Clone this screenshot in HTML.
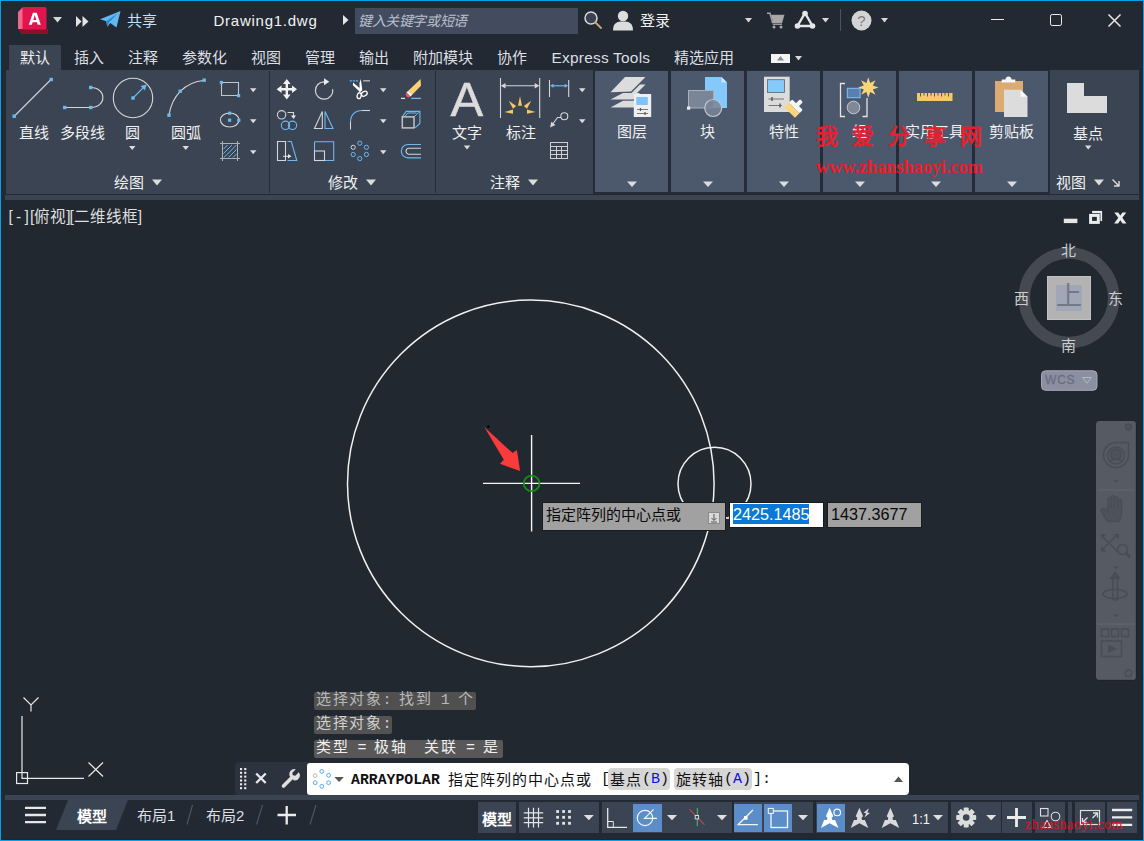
<!DOCTYPE html>
<html lang="zh-CN">
<head>
<meta charset="utf-8">
<title>Autodesk AutoCAD - Drawing1.dwg</title>
<style>
*{box-sizing:border-box;margin:0;padding:0}
html,body{width:1144px;height:841px;overflow:hidden;background:#222933}
body{font-family:"Liberation Sans",sans-serif;color:#ececec;font-size:15px;position:relative}
.t{position:absolute;white-space:nowrap;line-height:16px;height:16px;font-size:15px}
.tab{color:#dcdfe3}
.lbl{color:#f0f0f0}
svg{position:absolute;overflow:visible}
.box{position:absolute}
#frame{position:absolute;left:0;top:0;width:1144px;height:841px;border:1.200px solid #08a0e8;box-shadow:inset 0 0 0 0.900px #25242c;z-index:50}
#ribbon{position:absolute;left:6px;top:70px;width:1133px;height:124px;background:#3b4453}
.hp{position:absolute;top:71px;width:73px;height:121px;background:#4c586c}
.sep{position:absolute;top:71px;width:1px;height:122px;background:#262c37}
#band1{position:absolute;left:5px;top:195px;width:1134px;height:5px;background:#3b4453}
#canvas{position:absolute;left:1px;top:200px;width:1142px;height:595px;background:#212830}
#band2{position:absolute;left:5px;top:795px;width:1134px;height:5px;background:#3b4453}
.cmp{font-family:"Liberation Serif",serif;font-weight:300;font-size:15px;color:#cdcdcd}
.hist{background:#555;color:#dadada;height:17.500px;line-height:17.500px;border-radius:2px;font-family:"Liberation Mono",monospace;font-size:15px;padding-left:2px;white-space:pre;letter-spacing:1.600px}
.hl{letter-spacing:-0.600px}
.vp{top:209px;color:#dedede;font-size:15.600px}
.cmdm{font-family:"Liberation Mono",monospace;font-size:15px;color:#111;line-height:18px;height:18px}
.sb{position:absolute;top:802px;height:31px;background:#3b4453}
.sba{position:absolute;top:804px;height:28px;background:#5b8dc9}
</style>
</head>
<body>
<!-- ===== TITLE BAR ===== -->
<div id="titlebar">
<svg id="logo" style="left:18px;top:6.500px" width="31" height="28" viewBox="0 0 31 28">
<polygon points="0,5 5,0 5,22 0,22" fill="#ef6a8a"/>
<polygon points="0,22 5,22 30,22 30,27 3,27" fill="#8e0f2c"/>
<rect x="4.5" y="0" width="24" height="22.5" rx="1.5" fill="#e2144e"/>
<path d="M10.800 17.800 L14.900 5.800 H18.700 L22.800 17.800 H19.700 L19 15.300 H14.600 L13.900 17.800 Z M15.300 12.900 H18.300 L16.800 8 Z" fill="#fff"/>
</svg>
<svg style="left:53px;top:17px" width="9" height="6" viewBox="0 0 9 6"><polygon points="0,0 9,0 4.5,5.5" fill="#d8d8d8"/></svg>
<svg style="left:76px;top:16px" width="13" height="11" viewBox="0 0 13 11"><polygon points="0,0 5.5,5.5 0,11" fill="#e4e4e4"/><polygon points="6.5,0 12.5,5.5 6.5,11" fill="#e4e4e4"/></svg>
<svg style="left:100px;top:11px" width="21" height="17" viewBox="0 0 21 17"><path d="M0 8.2 L20.5 0 L16.5 16.5 L10.3 12 L7.3 15.8 L6.2 10.3 Z" fill="#62b8f2"/><path d="M6.2 10.3 L18 2.2 L9 11.3 L7.3 15.8 Z" fill="#2f86c8"/></svg>
<div class="t" style="left:127px;top:13px;color:#bfe0ff">共享</div>
<div class="t" style="left:213.500px;top:11.500px;font-size:15px;letter-spacing:0.750px;line-height:18px;height:18px;color:#f2f2f2">Drawing1.dwg</div>
<svg style="left:343px;top:15px" width="6" height="10" viewBox="0 0 6 10"><polygon points="0,0 5.5,5 0,10" fill="#e8e8e8"/></svg>
<div class="box" style="left:355px;top:8px;width:223px;height:26px;background:#434c5f"></div>
<div class="t" style="left:358px;top:13px;font-style:italic;font-size:14px;color:#b9bfcc;letter-spacing:-0.4px">键入关键字或短语</div>
<svg style="left:583px;top:10px" width="20" height="20" viewBox="0 0 20 20"><circle cx="8" cy="8" r="6" fill="#3a4150" stroke="#d8d8d8" stroke-width="1.500"/><path d="M12.500 12.500 L18 18" stroke="#c9a36a" stroke-width="2" stroke-linecap="round"/></svg>
<svg style="left:612px;top:10px" width="22" height="21" viewBox="0 0 22 21"><circle cx="11" cy="6" r="5.2" fill="#dcdcdc"/><path d="M1 20.5 C1 13 5 11.5 11 11.5 C17 11.5 21 13 21 20.5 Z" fill="#dcdcdc"/></svg>
<div class="t" style="left:640px;top:13px;color:#f2f2f2">登录</div>
<svg style="left:745px;top:18px" width="7" height="5" viewBox="0 0 7 5"><polygon points="0,0 7,0 3.5,4.5" fill="#d8d8d8"/></svg>
<svg style="left:767px;top:11.500px" width="20" height="18" viewBox="0 0 20 18"><path d="M0 1.200 H3 L5.500 10.500 H14.500 L16.500 3.500 H4.500" fill="none" stroke="#a4a4a4" stroke-width="1.500"/><path d="M4.500 4 H16 L14.500 10 H6 Z" fill="#a9a9a9"/><path d="M5.800 12.300 H15" stroke="#a4a4a4" stroke-width="1.200"/><circle cx="7" cy="15" r="1.500" fill="#a9a9a9"/><circle cx="14" cy="15" r="1.500" fill="#a9a9a9"/></svg>
<svg style="left:794px;top:10px" width="22" height="20" viewBox="0 0 22 20"><path d="M11 3 L3.5 16 H18.5 Z" fill="none" stroke="#e6e6e6" stroke-width="2.4" stroke-linejoin="round"/><circle cx="11" cy="3.5" r="2.8" fill="#e6e6e6"/><circle cx="3.5" cy="16" r="2.8" fill="#e6e6e6"/><circle cx="18.5" cy="16" r="2.8" fill="#e6e6e6"/></svg>
<svg style="left:822px;top:18px" width="7" height="5" viewBox="0 0 7 5"><polygon points="0,0 7,0 3.5,4.5" fill="#d8d8d8"/></svg>
<div class="box" style="left:840px;top:9px;width:1px;height:22px;background:#4a5263"></div>
<svg style="left:851px;top:10px" width="21" height="21" viewBox="0 0 21 21"><circle cx="10.5" cy="10.5" r="10" fill="#d4d4d4"/><text x="10.500" y="15.800" text-anchor="middle" font-family="Liberation Sans, sans-serif" font-size="15" fill="#7d7d7d">?</text></svg>
<svg style="left:881px;top:18px" width="7" height="5" viewBox="0 0 7 5"><polygon points="0,0 7,0 3.5,4.5" fill="#d8d8d8"/></svg>
<div class="box" style="left:991px;top:18.500px;width:13px;height:1.500px;background:#ececec"></div>
<div class="box" style="left:1049.700px;top:13.700px;width:12.600px;height:12.600px;border:1.700px solid #ececec;border-radius:2.200px"></div>
<svg style="left:1108px;top:14px" width="13" height="13" viewBox="0 0 13 13"><path d="M0.5 0.5 L12.5 12.5 M12.5 0.5 L0.5 12.5" stroke="#e8e8e8" stroke-width="1.5"/></svg>
</div>
<!-- ===== TABS ===== -->
<div id="tabs">
<div class="box" style="left:9px;top:45px;width:52px;height:26px;background:#3b4453"></div>
<div class="t lbl" style="left:20px;top:50px">默认</div>
<div class="t tab" style="left:74px;top:50px">插入</div>
<div class="t tab" style="left:128px;top:50px">注释</div>
<div class="t tab" style="left:182px;top:50px">参数化</div>
<div class="t tab" style="left:251px;top:50px">视图</div>
<div class="t tab" style="left:305px;top:50px">管理</div>
<div class="t tab" style="left:359px;top:50px">输出</div>
<div class="t tab" style="left:413px;top:50px">附加模块</div>
<div class="t tab" style="left:497px;top:50px">协作</div>
<div class="t tab" style="left:551.500px;top:50px;font-size:15.400px;letter-spacing:0.250px">Express Tools</div>
<div class="t tab" style="left:674px;top:50px">精选应用</div>
<div class="box" style="left:771px;top:54px;width:19px;height:9px;background:#f4f4f4"></div>
<svg style="left:777px;top:56px" width="7" height="5" viewBox="0 0 7 5"><polygon points="0,4.5 7,4.5 3.5,0" fill="#8a8a8a"/></svg>
<svg style="left:795px;top:56px" width="7" height="5" viewBox="0 0 7 5"><polygon points="0,0 7,0 3.5,4.5" fill="#d8d8d8"/></svg>
</div>
<!-- ===== RIBBON ===== -->
<div id="ribbon"></div>
<div id="band1"></div>
<div id="ribbon-content">
<!-- separators -->
<div class="sep" style="left:269px"></div>
<div class="sep" style="left:435px"></div>
<!-- highlighted collapsed panels -->
<div class="box" style="left:593px;top:70px;width:457px;height:124px;background:#262c37"></div>
<div class="hp" style="left:595px"></div><div class="hp" style="left:671px"></div><div class="hp" style="left:747px"></div>
<div class="hp" style="left:823px"></div><div class="hp" style="left:899px"></div><div class="hp" style="left:975px"></div>
<!-- DRAW panel icons: one svg in page coords -->
<svg style="left:0;top:0" width="1144" height="200" viewBox="0 0 1144 200" fill="none" stroke-linecap="butt">
<g stroke="#d6d6d6" stroke-width="1.1">
<!-- line -->
<path d="M14.5 116 L51 79.5"/>
<!-- polyline -->
<path d="M64.500 107.500 H90.500 M90.500 87.500 C107 87.500 107 107.500 90.500 107.500"/>
<!-- circle -->
<circle cx="133" cy="98" r="19.7"/>
<!-- arc -->
<path d="M169 115 C172 96 185 82 204 80.5"/>
<!-- rect -->
<path d="M221.500 82.500 H238.500 V95.500 H221.500 Z" stroke="#c4c4c4"/>
<!-- ellipse -->
<ellipse cx="229.7" cy="120" rx="9.3" ry="7"/>
<!-- hatch frame -->
<path d="M222.500 141 V161 M237.500 141 V161 M220 143.500 H240 M220 158.500 H240" stroke="#b0b0b0" stroke-width="1"/>
</g>
<g stroke="#6cb9f0" stroke-width="1.1">
<path d="M133 98 L144.5 86.5"/>
<path d="M224 157.500 L236.500 145 M223.500 153.500 L232 145 M223.500 149 L227.500 145 M228.500 157.500 L236.500 149.500 M233 157.500 L236.500 154" stroke-width="1"/>
</g>
<polygon points="146.5,84.5 140.5,86 145,90.5" fill="#6cb9f0"/>
<g fill="#6cb9f0">
<rect x="12.5" y="114.5" width="3.4" height="3.4"/><rect x="49.5" y="77.8" width="3.4" height="3.4"/>
<rect x="63" y="105.800" width="3.400" height="3.400"/><rect x="89" y="105.800" width="3.400" height="3.400"/><rect x="89" y="85.8" width="3.4" height="3.4"/>
<rect x="131.3" y="96.3" width="3.4" height="3.4"/>
<rect x="167.3" y="113.5" width="3.4" height="3.4"/><rect x="178.5" y="89.5" width="3.4" height="3.4"/><rect x="202.5" y="78.5" width="3.4" height="3.4"/>
<rect x="219.800" y="80.900" width="3.200" height="3.200"/><rect x="237" y="94" width="3.200" height="3.200"/>
<rect x="228" y="111.600" width="3.200" height="3.200"/><rect x="228" y="118.600" width="3.200" height="3.200"/><rect x="237.200" y="118.600" width="3.200" height="3.200"/>
</g>
<!-- small dropdown arrows -->
<g fill="#dcdcdc">
<polygon points="250,88.2 256.5,88.2 253.2,92.2"/><polygon points="250,119.2 256.5,119.2 253.2,123.2"/><polygon points="250,150.2 256.5,150.2 253.2,154.2"/>
<polygon points="129,146 135.5,146 132.2,150"/><polygon points="182.5,146 189,146 185.7,150"/>
<polygon points="152,179.5 162,179.5 157,185.5"/>
<polygon points="380,88.2 386.5,88.2 383.2,92.2"/><polygon points="380,119.2 386.5,119.2 383.2,123.2"/><polygon points="380,150.2 386.5,150.2 383.2,154.2"/>
<polygon points="366,179.5 376,179.5 371,185.5"/>
<polygon points="463.8,145.5 470.3,145.5 467,149.5"/>
<polygon points="579,88.2 585.5,88.2 582.2,92.2"/><polygon points="579,119.2 585.5,119.2 582.2,123.2"/>
<polygon points="528,179.5 538,179.5 533,185.5"/>
</g>
<!-- MODIFY panel -->
<!-- move -->
<g fill="#f2f2f2" stroke="none">
<path d="M286.8 79 L290.6 84 H288 V88 H292 V85.4 L297 89.2 L292 93 V90.4 H288 V94.4 H290.6 L286.8 99.4 L283 94.4 H285.6 V90.4 H281.6 V93 L276.6 89.2 L281.6 85.4 V88 H285.6 V84 H283 Z"/>
</g>
<!-- rotate -->
<path d="M324.500 81.800 A8.700 8.700 0 1 0 332.700 89.200" stroke="#d6d6d6" stroke-width="1.200"/>
<polygon points="324,78.300 329.300,81.800 324,85.300" fill="#ececec"/>
<!-- trim scissors -->
<path d="M360.850 79 L362.300 90.300 L359.600 91.800 L359.500 83 Z" fill="#fff"/>
<path d="M353 82.400 L362 90 L360.200 92.300 L352.900 85.300 Z" fill="#fff"/>
<ellipse cx="359.200" cy="95.700" rx="2" ry="3" transform="rotate(14 359.200 95.700)" stroke="#fff" stroke-width="1.300"/>
<ellipse cx="364.300" cy="93.700" rx="3.100" ry="2.200" transform="rotate(-32 364.300 93.700)" stroke="#fff" stroke-width="1.300"/>
<path d="M349.800 80.800 H359" stroke="#6cb9f0" stroke-width="1.300" stroke-dasharray="2 1"/>
<path d="M363.200 80.800 H370" stroke="#bdbdbd" stroke-width="1.300"/>
<!-- eraser -->
<polygon points="420.600,78.900 421,85.800 412.200,94.700 408.300,90.700" fill="#fbd271"/>
<polygon points="408.300,90.700 412.200,94.700 410.400,96.500 406.500,92.600" fill="#fff"/>
<path d="M406.500 92.600 A2.760 2.760 0 0 0 410.400 96.500 Z" fill="#f4545c"/>
<path d="M401 98.400 H405.100" stroke="#e0e0e0" stroke-width="1.300"/><path d="M411.200 98.400 H421" stroke="#6cb9f0" stroke-width="1.300"/>
<!-- copy -->
<circle cx="281.6" cy="114.8" r="4.2" stroke="#d6d6d6" stroke-width="1.1"/>
<path d="M287.5 112.5 H293.5 V116" stroke="#d6d6d6" stroke-width="1.1"/><polygon points="291,115.5 296,115.5 293.5,119" fill="#e6e6e6"/>
<circle cx="285.5" cy="125.3" r="4.2" stroke="#6cb9f0" stroke-width="1.1"/><circle cx="292.5" cy="125.3" r="4.2" stroke="#6cb9f0" stroke-width="1.1"/>
<!-- mirror -->
<path d="M322.3 111.5 L314.5 128.5 H322.3 Z" stroke="#d6d6d6" stroke-width="1.1"/>
<path d="M325 111.5 L333 128.5 H325 Z" stroke="#6cb9f0" stroke-width="1.1"/>
<!-- fillet -->
<path d="M350.5 129.5 V122" stroke="#d6d6d6" stroke-width="1.1"/><path d="M362 110.5 H370" stroke="#d6d6d6" stroke-width="1.1"/>
<path d="M350.5 122 C350.5 115 355 110.5 362 110.5" stroke="#6cb9f0" stroke-width="1.2"/>
<!-- 3d box -->
<path d="M402.300 116.900 L406.200 111.400 H419.900 V123.400 L415 127.800" stroke="#6cb9f0" stroke-width="1.100"/>
<path d="M414 116.900 L419.900 111.400 M405 116.500 L407.800 113 H416.500" stroke="#6cb9f0" stroke-width="1"/>
<rect x="402.300" y="116.900" width="11.700" height="11" stroke="#c4c4c4" stroke-width="1.500"/>
<!-- stretch -->
<path d="M285.500 141.500 H277.500 V160.500 H285.500 Z" stroke="#d6d6d6" stroke-width="1.100"/>
<path d="M287.500 141.500 H291.300 L296.800 160.500 H287.500" stroke="#6cb9f0" stroke-width="1.100"/>
<path d="M283 156.3 H289" stroke="#e6e6e6" stroke-width="1"/><polygon points="288,154 291.5,156.3 288,158.6" fill="#e6e6e6"/>
<!-- scale -->
<path d="M314.5 141.7 H333.7 V160.5 H325" stroke="#6cb9f0" stroke-width="1.1"/><path d="M314.5 141.7 V151" stroke="#6cb9f0" stroke-width="1.1"/>
<rect x="314.5" y="151" width="10" height="9.5" stroke="#d6d6d6" stroke-width="1.1"/>
<!-- array polar -->
<g stroke="#6cb9f0" stroke-width="1">
<circle cx="359.8" cy="143.2" r="2.1"/><circle cx="366.4" cy="147.3" r="2.1"/><circle cx="366.4" cy="154.5" r="2.1"/><circle cx="359.8" cy="158.6" r="2.1"/><circle cx="353.2" cy="154.5" r="2.1"/>
</g>
<circle cx="353.2" cy="147.3" r="2.1" stroke="#d6d6d6" stroke-width="1"/>
<!-- offset -->
<path d="M421 144.5 H408 A6.5 6.5 0 0 0 408 157.8 H421" stroke="#6cb9f0" stroke-width="1.2"/>
<path d="M421 148.2 H409 A3 3 0 0 0 409 154.2 H421" stroke="#d6d6d6" stroke-width="1.1"/>
<!-- ANNOTATE -->
<!-- dimension big -->
<g stroke="#d6d6d6" stroke-width="1.1">
<path d="M500.5 78 V118 M539.7 78 V118 M503 85.8 H537"/>
<path d="M549.5 80 V97 M568.7 80 V97"/>
</g>
<polygon points="500.8,85.8 505.5,83 505.5,88.6" fill="#d6d6d6"/><polygon points="539.4,85.8 534.7,83 534.7,88.6" fill="#d6d6d6"/>
<g fill="#f7c95a">
<polygon points="520,96.300 518,105.800 522,105.800"/>
<polygon points="508.800,100.700 513,108.800 516.200,106"/>
<polygon points="531.200,100.700 527,108.800 523.800,106"/>
<polygon points="504.500,112 513,109.600 513,113.800"/>
<polygon points="535.500,112 527,109.600 527,113.800"/>
</g>
<path d="M552 85.8 H566.5" stroke="#6cb9f0" stroke-width="1.2"/>
<polygon points="550,85.8 553.5,83.8 553.5,87.8" fill="#6cb9f0"/><polygon points="568.2,85.8 564.7,83.8 564.7,87.8" fill="#6cb9f0"/>
<!-- leader -->
<circle cx="564.3" cy="116.3" r="3.5" stroke="#d6d6d6" stroke-width="1.1"/>
<path d="M561 117.5 H557.5 L552 125" stroke="#d6d6d6" stroke-width="1.1"/><polygon points="550,127.5 551.3,121.8 555.5,125" fill="#d6d6d6"/>
<!-- table -->
<g stroke="#cfcfcf" stroke-width="1"><rect x="550.500" y="142.500" width="17" height="16"/><path d="M550.500 146.500 H567.500 M550.500 150.500 H567.500 M550.500 154.500 H567.500 M556.500 146.500 V158.500 M561.500 146.500 V158.500"/></g>
</svg>
<!-- labels -->
<div class="t lbl" style="left:19px;top:125px">直线</div>
<div class="t lbl" style="left:60px;top:125px">多段线</div>
<div class="t lbl" style="left:125px;top:125px">圆</div>
<div class="t lbl" style="left:171px;top:125px">圆弧</div>
<div class="t lbl" style="left:114px;top:175px">绘图</div>
<div class="t lbl" style="left:328px;top:175px">修改</div>
<div class="t lbl" style="left:452px;top:125px">文字</div>
<div class="t lbl" style="left:506px;top:125px">标注</div>
<div class="t lbl" style="left:490px;top:175px">注释</div>
<div class="t" style="left:450.500px;top:70.500px;font-size:49px;line-height:56px;height:56px;color:#dcdcdc;-webkit-text-stroke:0.500px #dcdcdc">A</div>
</div>

<div id="ribbon-content2">
<svg style="left:0;top:0" width="1144" height="200" viewBox="0 0 1144 200" fill="none">
<!-- layers -->
<g fill="#dcdcdc">
<polygon points="625,77 645.5,77 631,91.5 610.5,92.2"/>
<polygon points="623,93 640,93 633,99.5 610.5,99.5" />
<polygon points="623,100.800 634,100.800 634,107.500 610.5,107.500"/>
<polygon points="640,84.500 645.500,84.500 637,93 631.500,93" />
</g>
<rect x="633.8" y="94" width="17.4" height="23" fill="#efefef"/>
<rect x="636.3" y="97" width="11.500" height="8" fill="#7cc4fb"/>
<path d="M637 109.500 H648 M637 113.500 H648" stroke="#7a7a7a" stroke-width="1"/><path d="M640.500 108 V111 M645 112 V115" stroke="#555" stroke-width="1.2"/>
<!-- block -->
<path d="M705 77 H721.500 L727 82.500 V108 H705 Z" fill="#85c9fc"/><polygon points="721.500,77 727,82.500 721.500,82.500" fill="#c8e6fd"/>
<rect x="688.5" y="90.5" width="25" height="17.5" fill="#7b8598" stroke="#a9b0bd" stroke-width="1"/>
<circle cx="713.2" cy="108" r="8.500" fill="#7b8598" fill-opacity="0.85" stroke="#c2c6cf" stroke-width="1.2"/>
<rect x="687" y="106.5" width="3.2" height="3.2" fill="#ececec"/>
<!-- properties -->
<rect x="764" y="76.700" width="25.700" height="35.300" fill="#dcdcdc"/>
<rect x="767.500" y="79.700" width="17" height="12.800" fill="#86cafc" stroke="#5a6270" stroke-width="0.800"/>
<path d="M768.500 99 H784 M768.500 105.500 H782" stroke="#777" stroke-width="1"/><path d="M772 97 V101 M780 103.500 V107.500" stroke="#555" stroke-width="1.400"/>
<g transform="translate(794.100,108) rotate(45)"><rect x="-7.500" y="0" width="15" height="6.300" fill="#fdd67a"/><rect x="-7.500" y="-4.800" width="15" height="4.800" rx="1.200" fill="#f4f4f4"/><rect x="-2.100" y="-10.500" width="4.200" height="6.500" rx="1.300" fill="#f4f4f4"/></g>
<!-- group -->
<path d="M845 83.500 H840.500 V116.500 H845 M862.500 116.500 H867 V98" stroke="#e4e4e4" stroke-width="1.300"/>
<rect x="847.300" y="88.300" width="12.800" height="9.400" fill="#5b7fae" stroke="#7cc4fb" stroke-width="1"/>
<circle cx="853.500" cy="107.500" r="6.300" fill="#7f8898" stroke="#c7cad1" stroke-width="1"/>
<polygon fill="#f8d577" points="868.3,77.300 870.200,83.000 875.500,80.300 872.800,85.600 878.500,87.500 872.800,89.400 875.500,94.700 870.200,92.000 868.300,97.700 866.400,92.000 861.100,94.700 863.800,89.400 858.100,87.500 863.800,85.600 861.100,80.300 866.400,83.000"/>
<!-- ruler -->
<rect x="917" y="93" width="35.500" height="8" fill="#f5c96a"/>
<path d="M920.500 93 V96.500 M924 93 V95.500 M927.500 93 V96.500 M931 93 V95.500 M934.500 93 V96.500 M938 93 V95.500 M941.500 93 V96.500 M945 93 V95.500 M948.500 93 V96.500" stroke="#4c586c" stroke-width="1"/>
<!-- clipboard -->
<rect x="995" y="81" width="28" height="31" fill="#dbab73"/>
<path d="M1001.700 82.500 V79.500 H1005.500 C1005.500 75.500 1011.500 75.500 1011.500 79.500 H1015.300 V82.500 Z" fill="#f6f6f6"/>
<path d="M1004 89.700 H1020.500 L1027.500 96.700 V117 H1004 Z" fill="#dcdcdc"/><polygon points="1020.500,89.700 1027.500,96.700 1020.500,96.700" fill="#f8f8f8"/>
<!-- base L-shape -->
<path d="M1067 83 H1084 V96 H1107 V113 H1067 Z" fill="#dcdcdc"/>
<!-- arrows -->
<g fill="#dcdcdc">
<polygon points="627,181.500 637,181.500 632,187"/><polygon points="703,181.500 713,181.500 708,187"/><polygon points="779,181.500 789,181.500 784,187"/>
<polygon points="855,181.500 865,181.500 860,187"/><polygon points="931,181.500 941,181.500 936,187"/><polygon points="1007,181.500 1017,181.500 1012,187"/>
<polygon points="1085,145.500 1091.500,145.500 1088.200,149.500"/>
<polygon points="1094,179.500 1104,179.500 1099,185.500"/>
</g>
<path d="M1112.500 179.500 L1119 186 M1119 181 V186 H1114" stroke="#dcdcdc" stroke-width="1.400"/>
</svg>
<div class="t lbl" style="left:617px;top:124px">图层</div>
<div class="t lbl" style="left:700px;top:124px">块</div>
<div class="t lbl" style="left:769px;top:124px">特性</div>
<div class="t lbl" style="left:852px;top:124px">组</div>
<div class="t lbl" style="left:905px;top:124px;letter-spacing:-0.5px">实用工具</div>
<div class="t lbl" style="left:989px;top:124px">剪贴板</div>
<div class="t lbl" style="left:1073px;top:126px">基点</div>
<div class="t lbl" style="left:1056px;top:175px">视图</div>
<!-- watermark -->
<div class="t" id="wm1" style="left:816px;top:124px;font-size:22px;line-height:26px;height:26px;font-weight:bold;color:#e6202c;letter-spacing:14.100px">我爱分享网</div>
<div class="t" id="wm2" style="left:816px;top:156px;font-family:'Liberation Serif',serif;font-weight:bold;font-size:18.200px;line-height:22px;height:22px;color:#e6202c">www.zhanshaoyi.com</div>
</div>

<!-- ===== CANVAS ===== -->
<div id="canvas"></div>
<div id="canvas-content">
<div class="t vp" style="left:8.500px;letter-spacing:3.200px">[-]</div><div class="t vp" style="left:30px">[俯视]</div><div class="t vp" style="left:69.500px">[二维线框]</div>
<svg style="left:0;top:0" width="1144" height="841" viewBox="0 0 1144 841" fill="none">
<!-- viewport controls -->
<rect x="1063.800" y="218.700" width="13.600" height="4.400" fill="#e6e6e6"/>
<rect x="1092.100" y="210.900" width="10" height="10.200" fill="#ececec"/>
<rect x="1088.400" y="213.200" width="12" height="11.300" fill="#212830"/>
<rect x="1090.600" y="215.400" width="7.700" height="7" stroke="#ececec" stroke-width="3"/>
<path d="M1114.300 212.500 H1118.200 L1120.300 215.500 L1122.400 212.500 H1126.300 L1122.300 217.800 L1126.500 223.400 H1122.500 L1120.300 220.200 L1118.100 223.400 H1114.100 L1118.300 217.800 Z" fill="#ececec"/>
<!-- main geometry -->
<circle cx="530.800" cy="483.400" r="183.300" stroke="#f0f0f0" stroke-width="1.500"/>
<circle cx="714.500" cy="483.800" r="36.500" stroke="#f0f0f0" stroke-width="1.500"/>
<path d="M483 483.400 H580 M531.600 435 V531.500" stroke="#f6f6f6" stroke-width="1.400"/>
<circle cx="531.600" cy="483.400" r="7.800" stroke="#12920f" stroke-width="1.800"/>
<!-- red arrow -->
<polygon points="484.3,426.9 512.6,453.1 516.9,450 520.1,471.1 500,463.700 503.800,459.700" fill="#fb3a3c"/>
<polygon points="488.400,424.900 490,426.500 488.400,428.100 486.800,426.500" fill="#000"/>
<!-- compass -->
<circle cx="1069" cy="297.800" r="44.700" stroke="#444952" stroke-width="11.500"/>
<rect x="1047.500" y="276.500" width="43" height="43" fill="#b3b3b3" stroke="#c2c2c2" stroke-width="1"/>
<rect x="1056" y="285" width="26" height="26" fill="#a2a7b8"/>
<!-- WCS -->
<rect x="1041.500" y="370.800" width="55.500" height="19.500" rx="4" fill="#8b8fa2" stroke="#a5a9b8" stroke-width="1"/>
<path d="M1082.500 377.500 H1091.500 L1087 383.300 Z" stroke="#b4b7c4" stroke-width="1" fill="#8b8fa2"/>
<!-- navbar -->
<rect x="1096" y="421" width="40" height="259" rx="3.500" fill="#565a62"/><path d="M1136.300 424 V677 M1099 680.300 H1133" stroke="#1c2129" stroke-width="0.800"/>
<g stroke="#484d56" fill="none" stroke-width="1.500">
<circle cx="1128.500" cy="427" r="3.800" fill="#484d56" stroke="none"/>
<path d="M1126.800 425.300 L1130.200 428.700 M1130.200 425.300 L1126.800 428.700" stroke="#565a62" stroke-width="1"/>
<path d="M1116 442.500 H1128.500 V455.500 A12.500 12.500 0 1 1 1116 442.500 Z"/>
<circle cx="1116" cy="455.500" r="8.500"/><circle cx="1116" cy="454.500" r="5.500" fill="#4e535b"/><path d="M1109.500 461 Q1116 457.500 1122.500 461"/>
<path d="M1097.500 490 H1134.500 M1097.500 624 H1134.500" stroke-width="1" stroke="#62666e"/>
<path d="M1102 536 L1118 552 M1118 534 L1102 550" stroke-width="1.600"/>
<circle cx="1122.500" cy="549.500" r="5"/><path d="M1126 553 L1130 557" stroke-width="3"/>
<path d="M1113 578 V600 M1117.500 578 V600 M1113 600 H1117.500" />
<ellipse cx="1115" cy="594" rx="12" ry="4.500"/>
<rect x="1101.500" y="629" width="7" height="7.500"/><rect x="1111.500" y="629" width="7" height="7.500"/><rect x="1121.500" y="629" width="7" height="7.500"/>
<rect x="1101.500" y="641" width="20" height="15.500"/>
<circle cx="1128.500" cy="673.300" r="3.300"/>
</g>
<g fill="#484d56">
<polygon points="1113.500,480 1118.500,480 1116,482.800"/><polygon points="1113.500,566.500 1118.500,566.500 1116,569.300"/><polygon points="1113.500,614.500 1118.500,614.500 1116,617.300"/>
<polygon points="1101,534 1106.500,534 1101,539.500"/><polygon points="1119,534 1113.500,534 1119,539.500"/><polygon points="1101,551.500 1106.500,551.500 1101,546"/>
<polygon points="1115.200,571 1109.500,579 1121,579"/>
<polygon points="1108,644.500 1117,648.700 1108,653"/>

</g>
<path d="M1106.500 520 C1103 514 1099.500 510 1102.500 508.500 C1105 507.500 1106.500 511 1108 512 V499.500 C1108 497 1111 497 1111 499.500 V497.500 C1111 495 1114.500 495 1114.500 497.500 V498.500 C1114.500 496 1118 496 1118 498.500 V501 C1118 498.800 1121.500 498.800 1121.500 501 V513 C1121.500 517 1120 519.500 1118.500 521.500 H1108 Z M1111 499.500 V508 M1114.500 498 V508 M1118 500 V508" fill="#4e535b" stroke="#484d56" stroke-width="1.300"/>
<!-- UCS icon -->
<g stroke="#e8e8e8" stroke-width="1.200">
<path d="M22 716 V778.300 H84"/>
<rect x="16.600" y="772.600" width="10.900" height="10.900"/>
<path d="M23.500 697.500 L31 705 L38.500 697.500 M31 705 V711.500"/>
<path d="M88.500 762.500 L103 776.500 M103 762.500 L88.500 776.500"/>
</g>
</svg>
<!-- compass letters -->
<div class="t cmp" style="left:1061px;top:243px">北</div>
<div class="t cmp" style="left:1014px;top:291px">西</div>
<div class="t cmp" style="left:1108px;top:291px">东</div>
<div class="t cmp" style="left:1061px;top:338px">南</div>
<div class="t" style="left:1056px;top:283px;font-family:'Liberation Serif',serif;font-weight:300;font-size:26px;line-height:28px;height:28px;color:#737888">上</div>
<div class="t" style="left:1045px;top:372px;font-size:12px;color:#6a6e80;letter-spacing:0.800px;-webkit-text-stroke:0.300px #6a6e80">WCS</div>
<!-- dynamic input -->
<div class="box" style="left:542px;top:502px;width:184px;height:29px;background:#a1a1a1;border:1px solid #1b1b1b"></div>
<div class="t" style="left:546px;top:506px;color:#0a0a0a;line-height:18px;height:18px">指定阵列的中心点或</div>
<svg style="left:708px;top:512px" width="12" height="12" viewBox="0 0 12 12"><rect x="0.500" y="0.500" width="11" height="11" fill="#d8d8d8" stroke="#8a8a8a"/><path d="M6 2 V8 M3.500 6 L6 8.500 L8.500 6 M3 10 H9" stroke="#555" stroke-width="1" fill="none"/></svg>
<div class="box" style="left:726px;top:517px;width:3px;height:2px;background:#cfcfcf"></div>
<div class="box" style="left:729px;top:502px;width:95px;height:26px;background:#fff;border:1px solid #1b1b1b"></div>
<div class="box" style="left:733.200px;top:504.300px;width:76.200px;height:19.700px;background:#0a78d7"></div>
<div class="t" style="left:733px;top:505px;font-size:16.200px;line-height:19px;height:19px;color:#fff">2425.1485</div>
<div class="box" style="left:827px;top:502px;width:95px;height:26px;background:#a1a1a1;border:1px solid #1b1b1b"></div>
<div class="t" style="left:831px;top:505px;font-size:16.200px;line-height:19px;height:19px;color:#0a0a0a">1437.3677</div>
<!-- command history -->
<div class="t hist" style="left:314px;top:692px;width:162px;color:#b8b8b8;background:#505050">选择对象<span class="hl">: </span>找到<span class="hl"> 1 </span>个</div>
<div class="t hist" style="left:314px;top:716px;width:78px;color:#d0d0d0;background:#535353">选择对象<span class="hl">:</span></div>
<div class="t hist" style="left:314px;top:740px;width:189px;color:#efefef;background:#585858">类型<span class="hl"> = </span>极轴<span class="hl">  </span>关联<span class="hl"> = </span>是</div>
</div>

<div id="band2"></div>
<div id="status-content">
<!-- command line -->
<div class="box" style="left:235.200px;top:762.200px;width:75px;height:33px;background:#2c323e;border-radius:4px 0 0 4px"></div>
<div class="box" style="left:307px;top:762.700px;width:601.800px;height:32px;background:#fff;border-radius:3px 4px 4px 3px"></div>
<svg style="left:0;top:0" width="1144" height="841" viewBox="0 0 1144 841" fill="none">
<g fill="#eaeaea">
<rect x="240" y="768" width="2.100" height="2.100"/><rect x="240" y="771.75" width="2.100" height="2.100"/><rect x="240" y="775.6" width="2.100" height="2.100"/><rect x="240" y="779.45" width="2.100" height="2.100"/><rect x="240" y="783.25" width="2.100" height="2.100"/><rect x="240" y="787.1" width="2.100" height="2.100"/><rect x="244.2" y="768" width="2.100" height="2.100"/><rect x="244.2" y="771.75" width="2.100" height="2.100"/><rect x="244.2" y="775.6" width="2.100" height="2.100"/><rect x="244.2" y="779.45" width="2.100" height="2.100"/><rect x="244.2" y="783.25" width="2.100" height="2.100"/><rect x="244.2" y="787.1" width="2.100" height="2.100"/>
</g>
<path d="M256.200 773.500 L265.700 783 M265.700 773.500 L256.200 783" stroke="#e8e8e8" stroke-width="2.400"/>
<!-- wrench -->
<path d="M283.500 786 L292 777.500" stroke="#e0e0e0" stroke-width="3.600" stroke-linecap="round"/>
<path d="M298.800 772.200 L295.300 775.700 L292.800 775.200 L292.300 772.700 L295.800 769.200 A5.200 5.200 0 0 0 289.500 776 L291.800 778.300 L294 780.500 A5.200 5.200 0 0 0 298.800 772.200 Z" fill="#e0e0e0"/>
<!-- arraypolar icon in cmd line -->
<g stroke="#55aaf0" stroke-width="1">
<circle cx="321.800" cy="771.400" r="1.900"/><circle cx="328.600" cy="775.300" r="1.900"/><circle cx="328.600" cy="782.700" r="1.900"/><circle cx="321.800" cy="786.300" r="1.900"/><circle cx="315.200" cy="782.700" r="1.900"/><circle cx="315.200" cy="775.600" r="1.900" stroke="#b8b8b8"/>
</g>
<polygon points="334.400,777.100 343.800,777.100 339.100,782" fill="#555"/>
<polygon points="894,782 903,782 898.500,776.500" fill="#555"/>
<!-- layout tabs -->
<polygon points="68,800 128,800 116,830 56,830" fill="#3b4453"/>
<path d="M25 807.800 H46 M25 815 H46 M25 822.200 H46" stroke="#e6e6e6" stroke-width="2.300"/>
<path d="M192.500 805 L187 824.500 M262.500 805 L256.500 824.500 M316 805 L310 824.500" stroke="#4c5466" stroke-width="1.200"/>
<path d="M277.500 815 H296 M286.700 806 V824.500" stroke="#ececec" stroke-width="2.300"/>
</svg>
<div class="t" style="left:351px;top:771.700px;font-family:'Liberation Mono',monospace;font-weight:bold;font-size:14.800px;color:#111;line-height:17px;height:17px">ARRAYPOLAR</div>
<div class="t" style="left:448px;top:770.700px;color:#111;line-height:18px;height:18px;letter-spacing:1px;font-size:15px">指定阵列的中心点或</div>
<div class="t cmdm" style="left:601px;top:770.700px">[</div>
<div class="box" style="left:608px;top:768px;width:62px;height:22px;background:#d6d6d6;border-radius:4px"></div>
<div class="t" style="left:610px;top:770.700px;color:#111;line-height:18px;height:18px;letter-spacing:1px">基点</div>
<div class="t cmdm" style="left:642px;top:770.700px">(<span style="color:#0b0bf5">B</span>)</div>
<div class="box" style="left:674px;top:768px;width:78px;height:22px;background:#d6d6d6;border-radius:4px"></div>
<div class="t" style="left:676px;top:770.700px;color:#111;line-height:18px;height:18px;letter-spacing:1px">旋转轴</div>
<div class="t cmdm" style="left:724px;top:770.700px">(<span style="color:#0b0bf5">A</span>)</div>
<div class="t cmdm" style="left:753px;top:770.700px">]:</div>
<div class="t" style="left:77px;top:808.500px;font-weight:bold;color:#fff">模型</div>
<div class="t tab" style="left:137px;top:808px">布局1</div>
<div class="t tab" style="left:206px;top:808px">布局2</div>
<div class="sb" style="left:478px;width:38px"></div>
<div class="sb" style="left:519px;width:80px"></div>
<div class="sb" style="left:602px;width:130px"></div><div class="sb" style="left:733.500px;width:79.500px"></div>
<div class="sb" style="left:815.500px;width:132.500px"></div>
<div class="sb" style="left:951px;width:50px"></div>
<div class="sb" style="left:1002px;width:30px"></div>
<div class="sb" style="left:1035px;width:30px"></div>
<div class="sb" style="left:1068px;width:4px"></div>
<div class="sb" style="left:1075px;width:30px"></div>
<div class="sb" style="left:1107px;width:30px"></div>
<div class="sba" style="left:633px;width:28.500px"></div>
<div class="sba" style="left:733.500px;width:28.500px"></div>
<div class="sba" style="left:764px;width:28px"></div>
<div class="sba" style="left:817px;width:28px"></div>
<div class="t" style="left:482px;top:811.500px;font-weight:bold;color:#fff;font-size:15px">模型</div>
<div class="t" style="left:912px;top:811.300px;color:#f4f4f4;font-size:15.500px;transform:scaleX(0.830);transform-origin:0 0">1:1</div>
<svg style="left:0;top:0" width="1144" height="841" viewBox="0 0 1144 841" fill="none">
<!-- grid -->
<path d="M528.500 807.800 V827.400 M533.500 807.800 V827.400 M538.500 807.800 V827.400 M523.800 812.900 H543.200 M523.800 817.800 H543.200 M523.800 822.700 H543.200" stroke="#e6e6e6" stroke-width="1.200"/>
<!-- snap dots -->
<g fill="#e4e4e4">
<rect x="556.2" y="810.1" width="2.800" height="2.800"/><rect x="562.2" y="810.1" width="2.800" height="2.800"/><rect x="568.1" y="810.1" width="2.800" height="2.800"/><rect x="556.2" y="815.9" width="2.800" height="2.800"/><rect x="562.2" y="815.9" width="2.800" height="2.800"/><rect x="568.1" y="815.9" width="2.800" height="2.800"/><rect x="556.2" y="821.9" width="2.800" height="2.800"/><rect x="562.2" y="821.9" width="2.800" height="2.800"/><rect x="568.1" y="821.9" width="2.800" height="2.800"/>
</g>
<g fill="#e0e0e0">
<polygon points="583.800,815 593.800,815 588.800,820.300"/><polygon points="667,815 677,815 672,820.300"/><polygon points="717,815 727,815 722,820.300"/>
<polygon points="798,815 808,815 803,820.300"/><polygon points="933,815 943,815 938,820.300"/><polygon points="986.200,815 996.200,815 991.200,820.300"/>
</g>
<!-- ortho L -->
<path d="M607.700 808 V827.400 H627" stroke="#e6e6e6" stroke-width="1.300"/><path d="M607.700 821.500 H613.300 V827.400" stroke="#e6e6e6" stroke-width="1"/>
<!-- polar -->
<circle cx="645" cy="818" r="7.700" stroke="#f4f4f4" stroke-width="1.200"/><path d="M657 818.300 H644.600 L653.600 809.300" stroke="#f4f4f4" stroke-width="1.200"/>
<!-- snap tracking -->
<path d="M697.300 808 V826.200" stroke="#46c463" stroke-width="1"/><path d="M689.500 809.300 L704.400 824.600" stroke="#c9474e" stroke-width="1.100"/><rect x="695.200" y="815.500" width="3.400" height="3.400" fill="#3b4453" stroke="#e8e8e8" stroke-width="0.900"/>
<!-- angle -->
<path d="M752.900 810 L738.300 824.600 H757.900" stroke="#f4f4f4" stroke-width="1.400"/><rect x="744" y="816.100" width="3.600" height="3.600" fill="#fff"/>
<!-- osnap rect -->
<rect x="771" y="811" width="16.500" height="16.500" stroke="#f4f4f4" stroke-width="1.300"/><rect x="768.300" y="808.400" width="5" height="5" fill="#5b8dc9" stroke="#f4f4f4" stroke-width="1"/>
<!-- annotation icons -->
<polygon points="829.60,807.80 833.27,816.20 831.70,817.80 832.20,819.90 835.10,820.10 838.50,828.00 829.60,823.30 820.95,828.00 824.10,820.10 827.00,819.90 827.50,817.80 825.93,816.20" fill="#fff"/><circle cx="837.200" cy="812.400" r="3.300" stroke="#fff" stroke-width="1.100"/>
<polygon points="859.40,807.80 863.07,816.20 861.50,817.80 862.00,819.90 864.90,820.10 868.30,828.00 859.40,823.30 850.75,828.00 853.90,820.10 856.80,819.90 857.30,817.80 855.73,816.20" fill="#d9d9d9"/><polygon points="868.860,808.300 863.600,812.750 866.200,813.300 864.400,817.500 869.900,813 867.300,812.500" fill="#d9d9d9"/>
<polygon points="890.36,807.80 894.03,816.20 892.46,817.80 892.96,819.90 895.86,820.10 899.26,828.00 890.36,823.30 881.71,828.00 884.86,820.10 887.76,819.90 888.26,817.80 886.69,816.20" fill="#d9d9d9"/>
<!-- gear -->
<g transform="translate(966.200,817.500)"><g fill="#dcdcdc">
<rect x="-2.500" y="-10" width="5" height="20" rx="0.800"/><rect x="-2.500" y="-10" width="5" height="20" rx="0.800" transform="rotate(45)"/><rect x="-2.500" y="-10" width="5" height="20" rx="0.800" transform="rotate(90)"/><rect x="-2.500" y="-10" width="5" height="20" rx="0.800" transform="rotate(135)"/>
<circle r="7.300"/></g><circle r="3.300" fill="#3b4453"/></g>
<!-- plus -->
<path d="M1007 817.500 H1026 M1016.500 808 V827" stroke="#ececec" stroke-width="2.800"/>
<!-- shapes -->
<rect x="1040.500" y="808.500" width="7.500" height="7.500" stroke="#e0e0e0" stroke-width="1.100"/><circle cx="1055.500" cy="816.500" r="4.300" stroke="#e0e0e0" stroke-width="1.100"/><path d="M1047 820.500 L1043 827.500 H1051 Z" stroke="#e0e0e0" stroke-width="1.100"/>
<!-- fullscreen -->
<rect x="1080.500" y="810.500" width="19" height="14" stroke="#e0e0e0" stroke-width="1.200"/>
<path d="M1092.500 818 L1097 813.500 M1093 813 H1097.500 V817.500" stroke="#e0e0e0" stroke-width="1.300"/><path d="M1087.500 817.500 L1083 822 M1087 822.500 H1082.500 V818" stroke="#e0e0e0" stroke-width="1.300"/>
<!-- hamburger -->
<path d="M1112 810 H1132.200 M1112 817.300 H1132.200 M1112 824.800 H1132.200" stroke="#ececec" stroke-width="2.300"/>
</svg>
<div class="t" id="wm3" style="left:1025px;top:816.500px;font-family:'Liberation Serif',serif;font-size:14px;letter-spacing:0.520px;line-height:16px;height:16px;color:#e0141c">zhanshaoyi.com</div>

</div>

<div id="frame"></div>
</body>
</html>
